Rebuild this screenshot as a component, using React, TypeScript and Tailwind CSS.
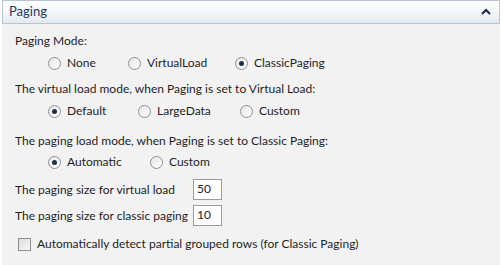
import React from "react";

function Radio({ label, checked }: { label: string; checked?: boolean }) {
  return (
    <label className="flex items-center gap-[6px] whitespace-nowrap">
      <span className="flex h-[13px] w-[13px] items-center justify-center rounded-full border border-[#8f8f8f] bg-gradient-to-br from-[#e6e6e6] to-white">
        {checked && <span className="h-[5px] w-[5px] rounded-full bg-[#1c2e48]" />}
      </span>
      <span>{label}</span>
    </label>
  );
}

export default function App() {
  return (
    <div className="h-[265px] w-[503px] bg-white font-['Lato',sans-serif] text-[12px] text-[#1e1e1e]">
      <div className="ml-[2px] mr-[3px] h-full bg-[#f2f2f2]">
        {/* Header */}
        <div className="flex h-[24px] items-center justify-between border border-[#b8c4d2] bg-gradient-to-b from-white via-[#f4f7fa] to-[#e1e8f0] px-[6px]">
          <span className="text-[13px] text-[#1e395b]">Paging</span>
          <svg width="10" height="8" viewBox="0 0 10 8" className="mr-[2px]">
            <path d="M1 6 L5 2 L9 6" stroke="#15284b" strokeWidth="2" fill="none" />
          </svg>
        </div>

        <div className="pl-[13px] pt-[8px]">
          <div className="leading-[18px]">Paging Mode:</div>
          <div className="mt-[4px] flex h-[18px] items-center pl-[33px]">
            <div className="w-[80px]"><Radio label="None" /></div>
            <div className="w-[107px]"><Radio label="VirtualLoad" /></div>
            <Radio label="ClassicPaging" checked />
          </div>

          <div className="mt-[8px] whitespace-nowrap leading-[18px]">The virtual load mode, when Paging is set to Virtual Load:</div>
          <div className="mt-[4px] flex h-[18px] items-center pl-[33px]">
            <div className="w-[90px]"><Radio label="Default" checked /></div>
            <div className="w-[102px]"><Radio label="LargeData" /></div>
            <Radio label="Custom" />
          </div>

          <div className="mt-[12px] whitespace-nowrap leading-[18px]">The paging load mode, when Paging is set to Classic Paging:</div>
          <div className="mt-[3px] flex h-[18px] items-center pl-[33px]">
            <div className="w-[102px]"><Radio label="Automatic" checked /></div>
            <Radio label="Custom" />
          </div>

          <div className="mt-[8px] flex items-center">
            <span className="w-[178px] whitespace-nowrap">The paging size for virtual load</span>
            <div className="h-[21px] w-[29px] border border-[#9b9b9b] bg-white pl-[3px] leading-[17px]">50</div>
          </div>
          <div className="mt-[5px] flex items-center">
            <span className="w-[178px] whitespace-nowrap">The paging size for classic paging</span>
            <div className="h-[21px] w-[29px] border border-[#9b9b9b] bg-white pl-[3px] leading-[17px]">10</div>
          </div>

          <div className="mt-[9px] flex items-center gap-[6px] pl-[3px]">
            <span className="h-[13px] w-[13px] border border-[#8f8f8f] bg-gradient-to-br from-[#dcdcdc] to-[#f8f8f8]" />
            <span className="whitespace-nowrap">Automatically detect partial grouped rows (for Classic Paging)</span>
          </div>
        </div>
      </div>
    </div>
  );
}
